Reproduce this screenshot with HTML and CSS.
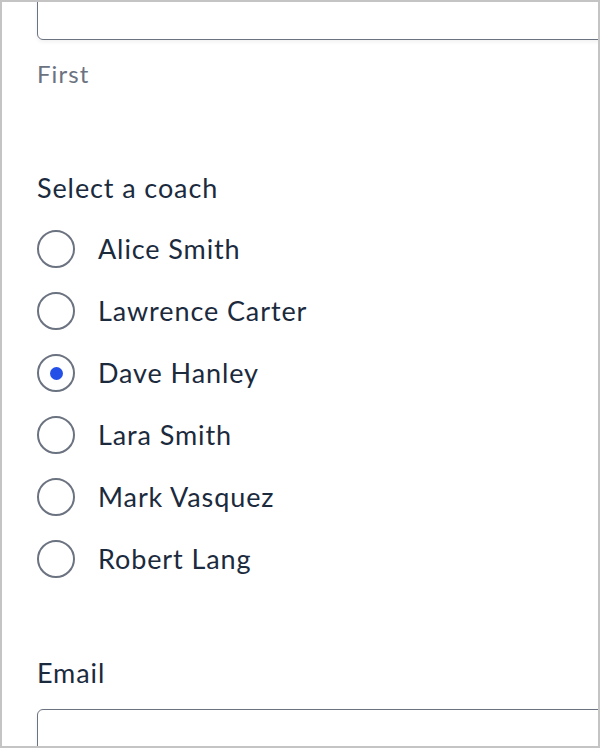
FILE: index.html
```html
<!DOCTYPE html>
<html>
<head>
<meta charset="utf-8">
<link rel="stylesheet" href="styles.css">
</head>
<body>
<div class="frame">
  <div class="content">
    <div class="field">
      <input class="text-input top-input" type="text">
      <div class="hint">First</div>
    </div>
    <fieldset class="group">
      <legend class="label">Select a coach</legend>
      <label class="option"><span class="radio"></span><span class="name">Alice Smith</span></label>
      <label class="option"><span class="radio"></span><span class="name">Lawrence Carter</span></label>
      <label class="option"><span class="radio checked"></span><span class="name">Dave Hanley</span></label>
      <label class="option"><span class="radio"></span><span class="name">Lara Smith</span></label>
      <label class="option"><span class="radio"></span><span class="name">Mark Vasquez</span></label>
      <label class="option"><span class="radio"></span><span class="name">Robert Lang</span></label>
    </fieldset>
    <div class="field email">
      <div class="label">Email</div>
      <input class="text-input" type="text">
    </div>
  </div>
</div>
</body>
</html>
```
FILE: styles.css
```css
html, body {
  margin: 0;
  padding: 0;
  background: #ffffff;
}
.frame {
  box-sizing: border-box;
  width: 600px;
  height: 748px;
  border: 2px solid #c4c4c4;
  overflow: hidden;
  font-family: "Lato", "Noto Sans", sans-serif;
  color: #1b2a3d;
}
.content {
  padding-left: 35px;
  margin-top: -12px;
}
.field {
  display: flex;
  flex-direction: column;
}
.text-input {
  box-sizing: border-box;
  width: 620px;
  height: 50px;
  border: 1.5px solid #6b7280;
  border-radius: 6px;
  background: #fff;
  box-shadow: 0 2px 4px rgba(0,0,0,0.06);
  margin: 0;
  padding: 0;
  outline: none;
}
.hint {
  margin-top: 19px;
  font-size: 24px;
  line-height: 30px;
  color: #6b7280;
  letter-spacing: 1.1px;
}
.group {
  border: 0;
  margin: 0;
  padding: 0;
  margin-top: 84px;
}
.label {
  padding: 0;
  font-size: 27px;
  line-height: 30px;
  letter-spacing: 0.9px;
  color: #1b2a3d;
}
.group .label {
  margin-bottom: 27px;
}
.option {
  display: flex;
  align-items: center;
  gap: 23px;
  height: 38px;
  margin-bottom: 24px;
}
.radio {
  box-sizing: border-box;
  width: 38px;
  height: 38px;
  border: 2px solid #6b7280;
  border-radius: 50%;
  display: flex;
  align-items: center;
  justify-content: center;
  flex: none;
}
.radio.checked::after {
  content: "";
  width: 13px;
  height: 13px;
  border-radius: 50%;
  background: #2450e8;
}
.name {
  font-size: 27px;
  letter-spacing: 0.9px;
  line-height: 30px;
}
.email {
  margin-top: 56px;
}
.email .label {
  margin-bottom: 21px;
}
```
